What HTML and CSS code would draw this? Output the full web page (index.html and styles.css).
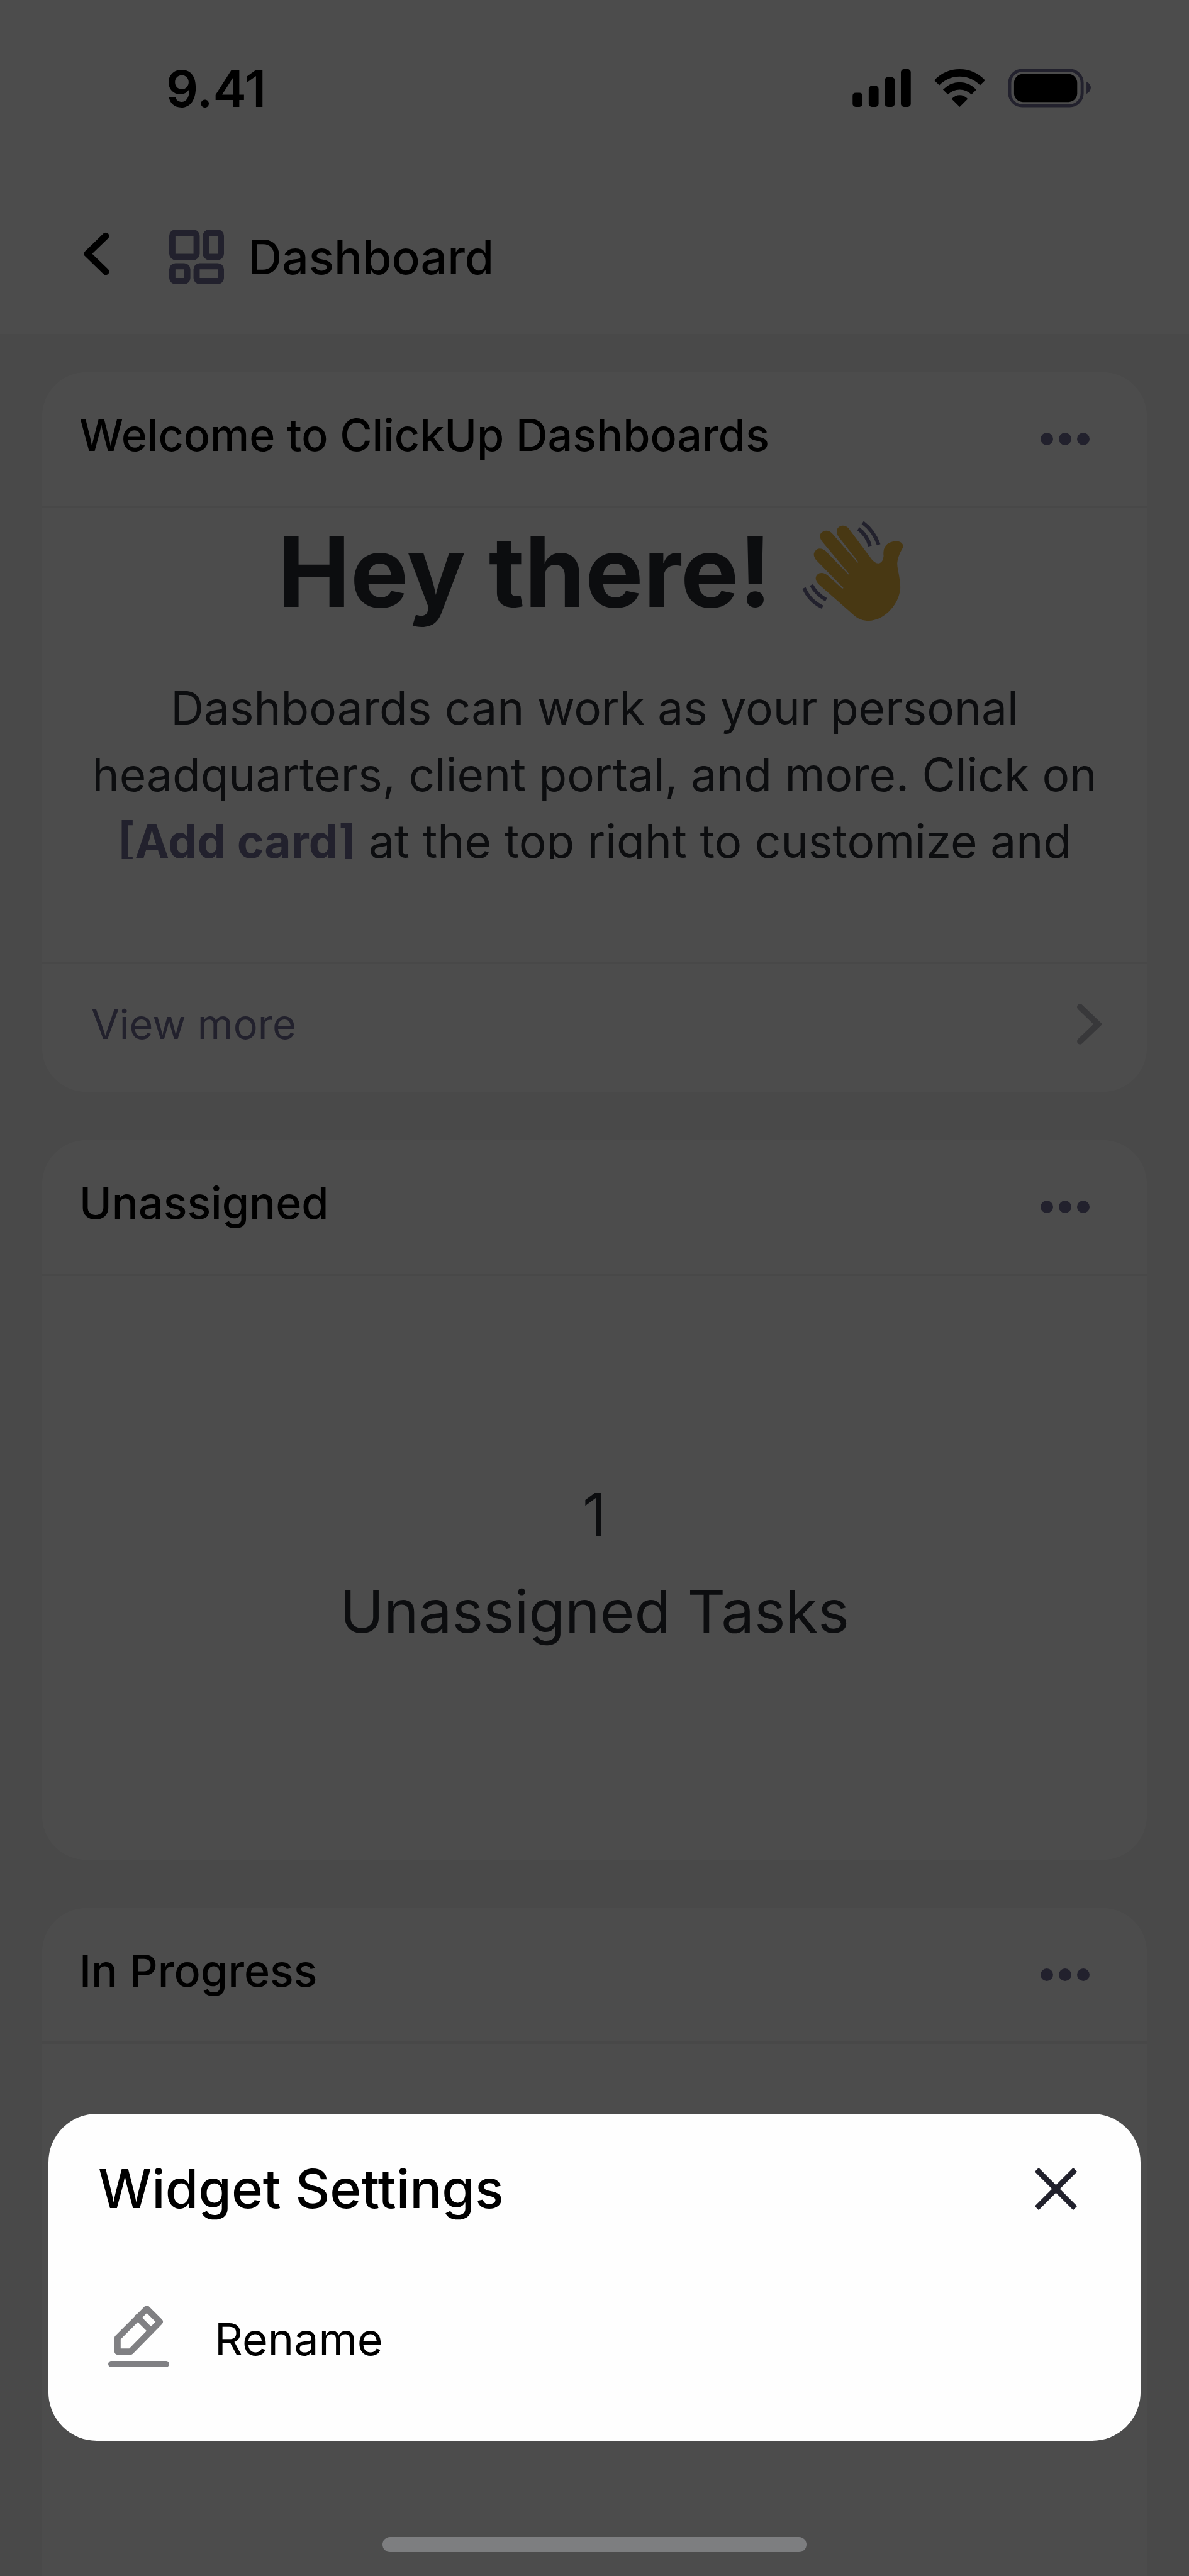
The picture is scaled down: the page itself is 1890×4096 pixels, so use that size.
FILE: index.html
```html
<!DOCTYPE html>
<html lang="en">

<head>
    <meta charset="UTF-8">
    <meta name="viewport" content="width=device-width, initial-scale=1.0">
    <title>Dashboard</title>
    <link rel="stylesheet" href="styles.css">
</head>

<body>
    <div class="screen">
        <header class="topbar">
            <div class="status">
                <span class="time">9.41</span>
                <div class="status-icons">
                    <svg class="signal" viewBox="0 0 95 61" aria-hidden="true">
                        <rect x="0" y="38" width="16" height="23" rx="5" />
                        <rect x="26" y="27" width="16" height="34" rx="5" />
                        <rect x="52" y="13" width="16" height="48" rx="5" />
                        <rect x="78" y="0" width="16" height="61" rx="5" />
                    </svg>
                    <svg class="wifi" viewBox="0 0 82 61" aria-hidden="true">
                        <path d="M0 18Q17 0 41 0T82 18L74 26Q60 12 41 12T8 26Z" />
                        <path d="M14 33Q26 21 41 21T68 33L60 41Q52 33 41 33T22 41Z" />
                        <path d="M28 48Q34 42 41 42T54 48L41 61Z" />
                    </svg>
                    <svg class="battery" viewBox="0 0 134 63" aria-hidden="true">
                        <rect class="battery-frame" x="3" y="3" width="117" height="57" rx="20" />
                        <rect x="10" y="9" width="102" height="45" rx="14" />
                        <path class="battery-cap" d="M127 21Q134 25 134 31T127 41Z" />
                    </svg>
                </div>
            </div>
            <nav class="nav">
                <button class="back" aria-label="Back">
                    <svg viewBox="0 0 42 70"><path d="M36 6L6 35L36 64" /></svg>
                </button>
                <svg class="grid-icon" viewBox="0 0 88 88" aria-hidden="true">
                    <rect x="5" y="5" width="39" height="39" rx="5" />
                    <rect x="59" y="5" width="24" height="39" rx="5" />
                    <rect x="5" y="59" width="24" height="24" rx="5" />
                    <rect x="44" y="59" width="39" height="24" rx="5" />
                </svg>
                <h1>Dashboard</h1>
            </nav>
        </header>

        <main class="cards">
            <section class="card">
                <div class="card-head">
                    <h2>Welcome to ClickUp Dashboards</h2>
                    <button class="more" aria-label="Card options"><i></i><i></i><i></i></button>
                </div>
                <div class="welcome">
                    <h3>
                        <span>Hey there!</span>
                        <svg class="wave" viewBox="0 0 165 163" aria-hidden="true">
                            <path class="hand" d="M59 26C52 15 59 8 66 8C70 8 73 10 75 12L113 63Q119 70 125 69Q131 67 132 57C131 45 134 34 153 33C159 33 164 37 164 42C160 49 155 58 154 69C154 76 156 82 157 89C159 102 160 110 158 116C154 138 132 162 108 162C99 162 91 159 85 154L28 104C24 100 22 97 22 93C23 84 34 81 43 90L65 110L67 109L23 64C19 59 18 54 20 51C24 43 32 44 38 49L75 87L76 86L32 33C29 29 28 25 30 21C35 14 44 15 49 21L90 68L91 67Z" />
                            <path class="motion" d="M98 3Q116 16 124 39M91 13Q105 23 110 41M3 109Q12 130 33 140M15 104Q23 119 39 128" />
                        </svg>
                    </h3>
                    <p>Dashboards can work as your personal headquarters, client portal, and more. Click on <a href="#">[Add card]</a> at the top right to customize and</p>
                </div>
                <a class="view-more" href="#">
                    View more
                    <svg viewBox="0 0 40 66" aria-hidden="true"><path d="M5 5L34 33L5 61" /></svg>
                </a>
            </section>

            <section class="card">
                <div class="card-head">
                    <h2>Unassigned</h2>
                    <button class="more" aria-label="Card options"><i></i><i></i><i></i></button>
                </div>
                <div class="count">
                    <span>1</span>
                    <span>Unassigned Tasks</span>
                </div>
            </section>

            <section class="card">
                <div class="card-head">
                    <h2>In Progress</h2>
                    <button class="more" aria-label="Card options"><i></i><i></i><i></i></button>
                </div>
            </section>
        </main>
    </div>

    <!-- bottom sheet -->
    <div class="overlay">
        <div class="sheet" role="dialog" aria-labelledby="sheet-title">
            <div class="sheet-head">
                <h2 id="sheet-title">Widget Settings</h2>
                <button class="close" aria-label="Close">
                    <svg viewBox="0 0 68 68"><path d="M3 3L65 65M65 3L3 65" /></svg>
                </button>
            </div>
            <button class="option">
                <svg viewBox="0 0 98 99" aria-hidden="true">
                    <path d="M15 74V52L62 5L83 26L36 74ZM47 19L69 41M5 94H93" />
                </svg>
                Rename
            </button>
        </div>
        <div class="home-bar"></div>
    </div>
</body>

</html>
```
FILE: styles.css
```css
* {
    box-sizing: border-box;
}

body {
    margin: 0;
    font-family: Inter, "Liberation Sans", sans-serif;
    background: #f4f4f4;
    color: #000;
}

h1, h2, h3, p {
    margin: 0;
    font-weight: 500;
}

button {
    border: none;
    padding: 0;
    background: none;
    font: inherit;
    color: inherit;
}

svg {
    display: block;
    flex: none;
}

.screen {
    height: 100vh;
    overflow: hidden;
}

/* status bar + navigation */
.topbar {
    height: 531px;
    background: #fff;
}

.status {
    display: flex;
    justify-content: space-between;
    align-items: center;
    height: 280px;
    padding: 0 156px 0 264px;
}

.time {
    font-size: 80px;
    font-weight: 600;
}

.status-icons {
    display: flex;
    align-items: center;
    gap: 36px;
}

.signal {
    width: 94px;
    height: 60px;
}

.wifi {
    width: 81px;
    height: 60px;
}

.battery {
    width: 132px;
    height: 62px;
}

.battery-frame {
    fill: none;
    stroke: #747196;
    stroke-width: 5;
}

.battery-cap {
    fill: #747196;
}

.nav {
    display: flex;
    align-items: center;
    height: 256px;
    padding-left: 133px;
}

.back {
    padding-bottom: 10px;
}

.back svg {
    width: 41px;
    height: 69px;
    fill: none;
    stroke: #000;
    stroke-width: 11;
    stroke-linecap: round;
    stroke-linejoin: round;
}

.grid-icon {
    width: 87px;
    height: 87px;
    margin: 0 38px 0 95px;
    fill: none;
    stroke: #747196;
    stroke-width: 10;
}

.nav h1 {
    font-size: 75px;
}

/* cards */
.cards {
    display: flex;
    flex-direction: column;
    gap: 77px;
    padding: 61px 67px 0;
}

.card {
    display: flex;
    flex-direction: column;
    min-height: 1144px;
    border-radius: 70px;
    background: #fff;
    overflow: hidden;
}

.card-head {
    display: flex;
    justify-content: space-between;
    align-items: center;
    height: 216px;
    padding: 0 91px 0 59px;
    border-bottom: 4px solid #f2f2f2;
}

.card-head h2 {
    padding-bottom: 14px;
    font-size: 70px;
}

.more {
    display: flex;
    gap: 9px;
}

.more i {
    width: 20px;
    height: 20px;
    border-radius: 50%;
    background: #747196;
}

.welcome {
    height: 558px;
    overflow: hidden;
    color: #292d34;
    text-align: center;
}

.welcome h3 {
    display: flex;
    justify-content: center;
    align-items: center;
    gap: 48px;
    height: 200px;
    padding-right: 12px;
    font-size: 155px;
    font-weight: 700;
}

.wave {
    width: 162px;
    height: 160px;
}

.hand {
    fill: #f0bb40;
}

.motion {
    fill: none;
    stroke: #747196;
    stroke-width: 6;
}

.welcome p {
    padding: 65px 60px 0;
    font-size: 73px;
    line-height: 106px;
    font-weight: 400;
}

.welcome a {
    color: #747196;
    font-weight: 700;
    text-decoration: none;
}

.view-more {
    display: flex;
    justify-content: space-between;
    align-items: center;
    height: 207px;
    margin-top: auto;
    padding: 0 72px 12px 78px;
    border-top: 4px solid #f2f2f2;
    color: #747196;
    font-size: 65px;
    text-decoration: none;
}

.view-more svg {
    width: 39px;
    height: 65px;
    fill: none;
    stroke: #bbbbc2;
    stroke-width: 10;
    stroke-linecap: round;
}

.count {
    display: flex;
    flex-direction: column;
    flex: 1;
    justify-content: center;
    align-items: center;
    padding-bottom: 16px;
    color: #292d34;
    font-size: 94px;
    line-height: 154px;
}

/* sheet */
.overlay {
    position: fixed;
    inset: 0;
    display: flex;
    flex-direction: column;
    justify-content: flex-end;
    padding: 0 77px 38px;
    background: rgba(0, 0, 0, 0.7);
}

.sheet {
    height: 520px;
    padding: 32px 101px 0 79px;
    border-radius: 77px;
    background: #fefefe;
}

.sheet-head {
    display: flex;
    justify-content: space-between;
    align-items: center;
    height: 174px;
}

.sheet-head h2 {
    font-size: 85px;
}

.close svg {
    width: 67px;
    height: 67px;
    fill: none;
    stroke: #21212c;
    stroke-width: 9;
}

.option {
    display: flex;
    align-items: center;
    gap: 72px;
    width: 100%;
    height: 304px;
    padding: 0 16px;
    font-size: 70px;
}

.option svg {
    width: 97px;
    height: 98px;
    margin-bottom: 8px;
    fill: none;
    stroke: #808083;
    stroke-width: 10;
    stroke-linecap: round;
    stroke-linejoin: round;
}

.home-bar {
    align-self: center;
    width: 674px;
    height: 24px;
    margin-top: 153px;
    border-radius: 12px;
    background: #7d7e80;
}
```
